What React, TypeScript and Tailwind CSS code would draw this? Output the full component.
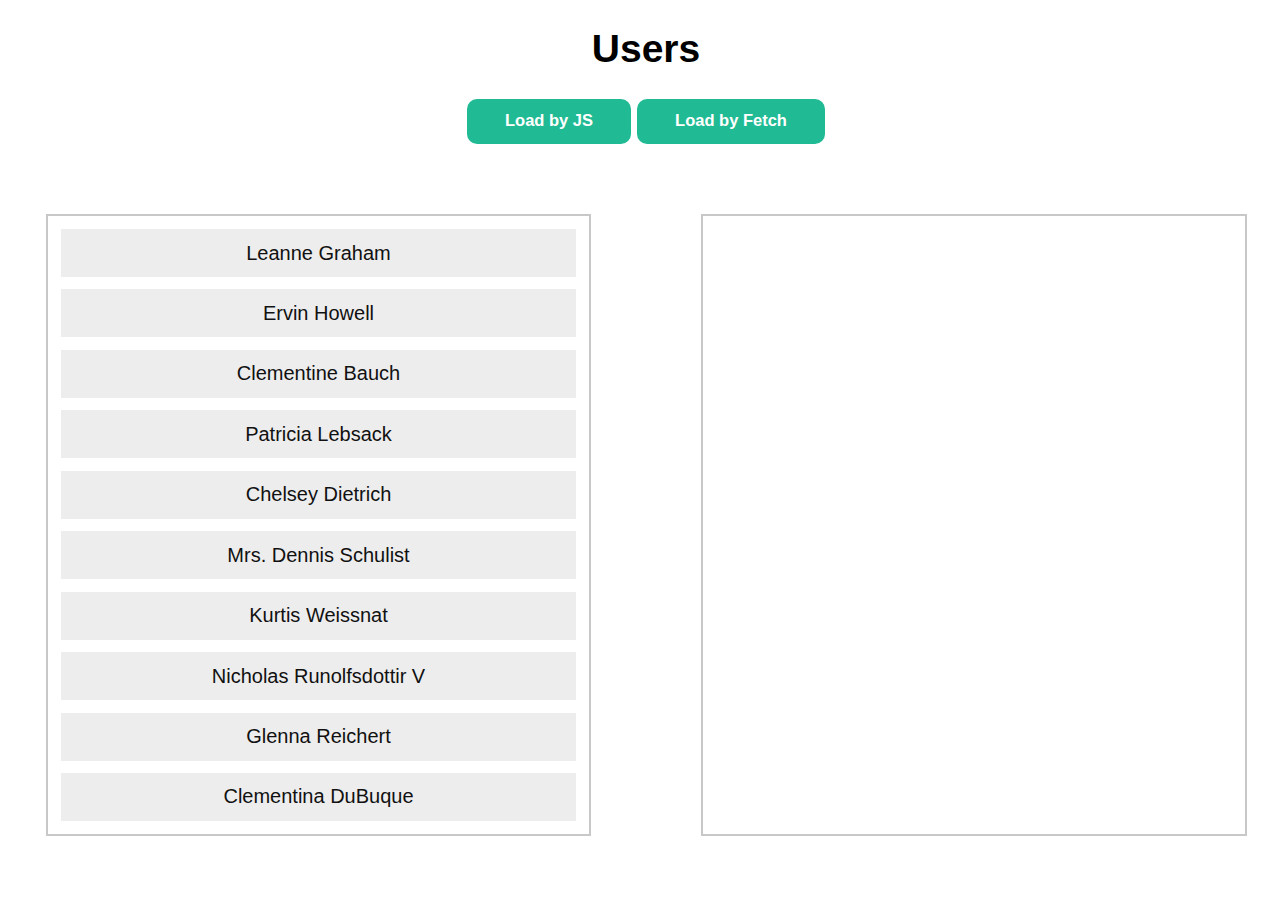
const users = [
  'Leanne Graham',
  'Ervin Howell',
  'Clementine Bauch',
  'Patricia Lebsack',
  'Chelsey Dietrich',
  'Mrs. Dennis Schulist',
  'Kurtis Weissnat',
  'Nicholas Runolfsdottir V',
  'Glenna Reichert',
  'Clementina DuBuque',
];

export default function App() {
  return (
    <div className="min-h-[923px] bg-white font-['Liberation_Sans',Arial,sans-serif] text-black">
      <h1 className="pl-[8px] pt-[26px] text-center text-[39px] font-bold leading-[46px]">Users</h1>
      <div className="mt-[27px] flex justify-center gap-[6px] pl-[8px]">
        <button className="h-[45px] w-[164px] rounded-[10px] bg-[#20bb94] pb-[2px] text-[16.5px] font-bold text-white">
          Load by JS
        </button>
        <button className="h-[45px] w-[188px] rounded-[10px] bg-[#20bb94] pb-[2px] text-[16.5px] font-bold text-white">
          Load by Fetch
        </button>
      </div>
      <div className="mt-[70px] flex gap-[110px] pl-[46px]">
        <ul className="flex h-[622px] w-[545px] flex-col gap-[12.44px] border-2 border-[#c8c8c8] p-[13px]">
          {users.map((u) => (
            <li
              key={u}
              className="flex h-[48px] shrink-0 items-center justify-center bg-[#ededed] pb-[1px] text-[20px] text-[#111]"
            >
              {u}
            </li>
          ))}
        </ul>
        <div className="h-[622px] w-[546px] border-2 border-[#c8c8c8]" />
      </div>
    </div>
  );
}
